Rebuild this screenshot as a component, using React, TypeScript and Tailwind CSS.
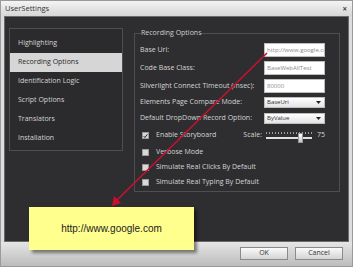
import React from 'react';

const navItems = [
  'Highlighting',
  'Recording Options',
  'Identification Logic',
  'Script Options',
  'Translators',
  'Installation',
];

const CheckBox: React.FC<{ checked?: boolean }> = ({ checked }) => (
  <span className="w-[7px] h-[7px] bg-[#d8d8d8] border border-[#9a9a9a] flex items-center justify-center shrink-0">
    {checked && (
      <svg width="6" height="6" viewBox="0 0 6 6">
        <path d="M0.8 3.2 L2.3 4.8 L5.2 0.9" stroke="#222" strokeWidth="1.2" fill="none" />
      </svg>
    )}
  </span>
);

const TextRow: React.FC<{ label: string; value: string }> = ({ label, value }) => (
  <div className="flex items-center h-[14px]">
    <span className="flex-1">{label}</span>
    <div className="w-[61px] h-[14px] bg-white border border-[#bdbdbd] text-[#8a8a8a] text-[6px] pl-[2px] flex items-center overflow-hidden whitespace-nowrap">
      {value}
    </div>
  </div>
);

const SelectRow: React.FC<{ label: string; value: string }> = ({ label, value }) => (
  <div className="flex items-center h-[11px]">
    <span className="flex-1">{label}</span>
    <div className="w-[61px] h-[11px] bg-gradient-to-b from-white to-[#e4e4e4] border border-[#bdbdbd] text-[#333] text-[6px] pl-[2px] pr-[3px] flex items-center justify-between">
      <span>{value}</span>
      <svg width="5" height="3" viewBox="0 0 5 3">
        <path d="M0 0 H5 L2.5 3 Z" fill="#222" />
      </svg>
    </div>
  </div>
);

const CheckRow: React.FC<{ label: string; checked?: boolean; children?: React.ReactNode }> = ({ label, checked, children }) => (
  <div className="flex items-center h-[15px] pl-[2px]">
    <CheckBox checked={checked} />
    <span className="ml-[7px]">{label}</span>
    {children}
  </div>
);

const Slider: React.FC = () => (
  <div className="ml-auto flex items-center">
    <span className="mr-[4px]">Scale:</span>
    <div className="w-[46px] h-[16px] flex flex-col justify-center">
      <div className="flex justify-between h-[2px] mb-[3px]">
        {Array.from({ length: 16 }).map((_, i) => (
          <span key={i} className="w-px h-[2px] bg-[#9a9a9a]" />
        ))}
      </div>
      <div className="h-[2px] bg-[#e0e0e0] relative">
        <span className="absolute left-[32px] top-[-4px] w-[5px] h-[10px] bg-gradient-to-b from-white to-[#c8c8c8] border border-[#999]" />
      </div>
    </div>
    <span className="ml-[5px]">75</span>
  </div>
);

export default function App() {
  return (
    <div className="w-[355px] h-[270px] bg-white relative overflow-hidden" style={{ fontFamily: '"Open Sans", "Noto Sans", sans-serif' }}>
      <div className="w-[353px] h-[267px] border border-[#9a9a9a] bg-[#dcdcdc] flex flex-col">
        {/* title bar */}
        <div className="h-[15px] bg-gradient-to-b from-[#f4f4f4] to-[#d6d6d6] flex items-center justify-between px-[4px] text-[7.5px] text-[#333]">
          <span>UserSettings</span>
          <span className="text-[8px] text-[#444] font-bold mr-[1px]">×</span>
        </div>

        {/* dark body */}
        <div className="mx-[3px] h-[226px] bg-[#2e2e30] border border-[#6a6a6a] flex items-start pt-[11px] pl-[4px] text-[7px] text-[#d4d4d4]">
          <div className="w-[114px] h-[123px] border border-[#4e4e50] bg-[#2b2b2d] pt-[5px]">
            {navItems.map(item => (
              <div
                key={item}
                className={
                  item === 'Recording Options'
                    ? 'h-[19px] flex items-center pl-[8px] bg-[#d6d6d6] text-[#2a2a2a]'
                    : 'h-[19px] flex items-center pl-[8px]'
                }
              >
                {item}
              </div>
            ))}
          </div>

          <fieldset className="ml-[11px] w-[206px] h-[164px] border border-[#4e4e50] px-[5px] pr-[14px]">
            <legend className="ml-[1px] leading-[10px] text-[#cfcfcf]">Recording Options</legend>
            <div className="flex flex-col mt-[5px]">
              <TextRow label="Base Url:" value="http://www.google.com" />
              <div className="h-[4px]" />
              <TextRow label="Code Base Class:" value="BaseWebAllTest" />
              <div className="h-[4px]" />
              <TextRow label="Silverlight Connect Timeout (msec):" value="80000" />
              <div className="h-[4px]" />
              <SelectRow label="Elements Page Compare Mode:" value="BaseUri" />
              <div className="h-[5px]" />
              <SelectRow label="Default DropDown Record Option:" value="ByValue" />
              <div className="h-[4px]" />
              <CheckRow label="Enable Storyboard" checked>
                <Slider />
              </CheckRow>
              <div className="h-[2px]" />
              <CheckRow label="Verbose Mode" />
              <CheckRow label="Simulate Real Clicks By Default" />
              <CheckRow label="Simulate Real Typing By Default" />
            </div>
          </fieldset>
        </div>

        {/* bottom bar */}
        <div className="flex-1 bg-gradient-to-b from-[#e6e6e6] to-[#bcbcbc] flex items-center justify-end gap-[7px] pr-[9px] pb-[1px] text-[7px] text-[#333]">
          <button className="w-[48px] h-[13px] border border-[#8a8a8a] bg-gradient-to-b from-[#fafafa] to-[#d4d4d4] flex items-center justify-center">OK</button>
          <button className="w-[48px] h-[13px] border border-[#8a8a8a] bg-gradient-to-b from-[#fafafa] to-[#d4d4d4] flex items-center justify-center">Cancel</button>
        </div>
      </div>

      {/* callout note */}
      <div
        className="absolute left-[29px] top-[207px] w-[165px] h-[43px] bg-[#ffff8e] flex items-center justify-center text-[10px] text-[#222] shadow-[3px_3px_3px_rgba(0,0,0,0.45)]"
        style={{ fontFamily: '"Liberation Sans", Arial, sans-serif' }}
      >
        http://www.google.com
      </div>

      {/* pointer line */}
      <svg className="absolute left-0 top-0 pointer-events-none" width="355" height="270" viewBox="0 0 355 270">
        <line x1="267" y1="53" x2="117" y2="200" stroke="#c8102e" strokeWidth="1.6" />
        <path d="M112 206 L114 196 L121 203 Z" fill="#c8102e" />
      </svg>
    </div>
  );
}
